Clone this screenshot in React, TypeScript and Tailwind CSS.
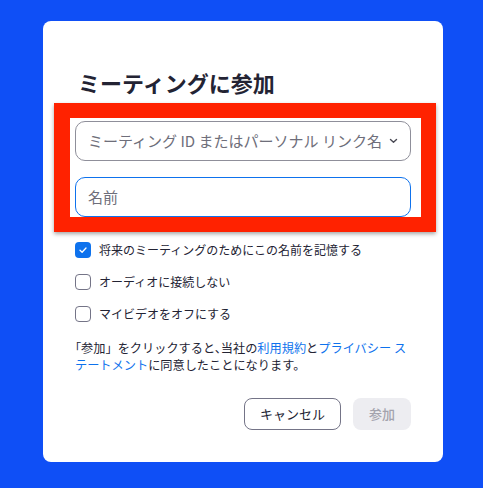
import { useState } from "react";

// Zoom "join meeting" dialog with a red annotation frame over the inputs.
const FONT = { fontFamily: '"Noto Sans CJK JP", "Noto Sans", sans-serif' };

function Check({ checked, label, onToggle }: { checked: boolean; label: string; onToggle: () => void }) {
  return (
    <label className="flex h-[32px] cursor-pointer items-center gap-[8px]" onClick={onToggle}>
      <span
        className={
          checked
            ? "flex h-[16px] w-[16px] items-center justify-center rounded-[4px] bg-[#0e72ed]"
            : "h-[16px] w-[16px] rounded-[4px] border border-[#747487] bg-white"
        }
      >
        {checked && (
          <svg width="10" height="10" viewBox="0 0 10 10" fill="none">
            <path d="M2 5.2 4.1 7.2 8 3" stroke="white" strokeWidth="1.3" strokeLinecap="round" strokeLinejoin="round" />
          </svg>
        )}
      </span>
      <span className="text-[12px] text-[#232333]">{label}</span>
    </label>
  );
}

export default function App() {
  const [remember, setRemember] = useState(true);
  const [noAudio, setNoAudio] = useState(false);
  const [noVideo, setNoVideo] = useState(false);

  return (
    <div className="h-[488px] w-[483px] bg-[#0f4ff6] pl-[43px] pt-[21px]" style={FONT}>
      <div className="relative h-[441px] w-[400px] rounded-[8px] bg-white px-[32px] pb-[32px] pt-[46px]">
        <h1 className="pl-[3px] text-[22px] font-bold leading-[30px] text-[#232333]">ミーティングに参加</h1>

        <div className="mt-[24px] flex h-[40px] items-center justify-between rounded-[10px] border border-[#8f8f9a] pl-[12px] pr-[12px]">
          <span className="text-[15px] text-[#6e6e7a]">ミーティング ID またはパーソナル リンク名</span>
          <svg width="9" height="6" viewBox="0 0 9 6" fill="none">
            <path d="M1.5 1.5 4.5 4.3 7.5 1.5" stroke="#4a4a55" strokeWidth="1.4" strokeLinecap="round" strokeLinejoin="round" />
          </svg>
        </div>

        <div className="mt-[16px] flex h-[40px] items-center rounded-[10px] border border-[#0e72ed] pl-[12px]">
          <span className="text-[15px] text-[#6e6e7a]">名前</span>
        </div>

        <div className="mt-[17px] flex flex-col">
          <Check checked={remember} label="将来のミーティングのためにこの名前を記憶する" onToggle={() => setRemember(!remember)} />
          <Check checked={noAudio} label="オーディオに接続しない" onToggle={() => setNoAudio(!noAudio)} />
          <Check checked={noVideo} label="マイビデオをオフにする" onToggle={() => setNoVideo(!noVideo)} />
        </div>

        <p className="mt-[10px] whitespace-nowrap text-[12.2px] leading-[17px] text-[#232333] [font-feature-settings:'halt']">
          「参加<span className="[font-feature-settings:normal]">」</span>をクリックすると、当社の
          <span className="text-[#0e72ed]">利用規約</span>と<span className="text-[#0e72ed]">プライバシー ス</span>
          <br />
          <span className="text-[#0e72ed]">テートメント</span>に同意したことになります。
        </p>

        <div className="mt-[24px] flex justify-end gap-[12px]">
          <button className="h-[32px] w-[97px] rounded-[8px] border border-[#747487] text-[13px] text-[#232333]">
            キャンセル
          </button>
          <button className="h-[32px] w-[58px] rounded-[8px] bg-[#ededf1] text-[13px] font-medium text-[#a3a3ad]">
            参加
          </button>
        </div>

        {/* red annotation frame */}
        <div className="pointer-events-none absolute left-[11px] top-[82px] h-[129px] w-[382px] border-[15px] border-l-[16px] border-[#ff2200] shadow-[0_2px_4px_rgba(0,0,0,0.35)]" />
      </div>
    </div>
  );
}
